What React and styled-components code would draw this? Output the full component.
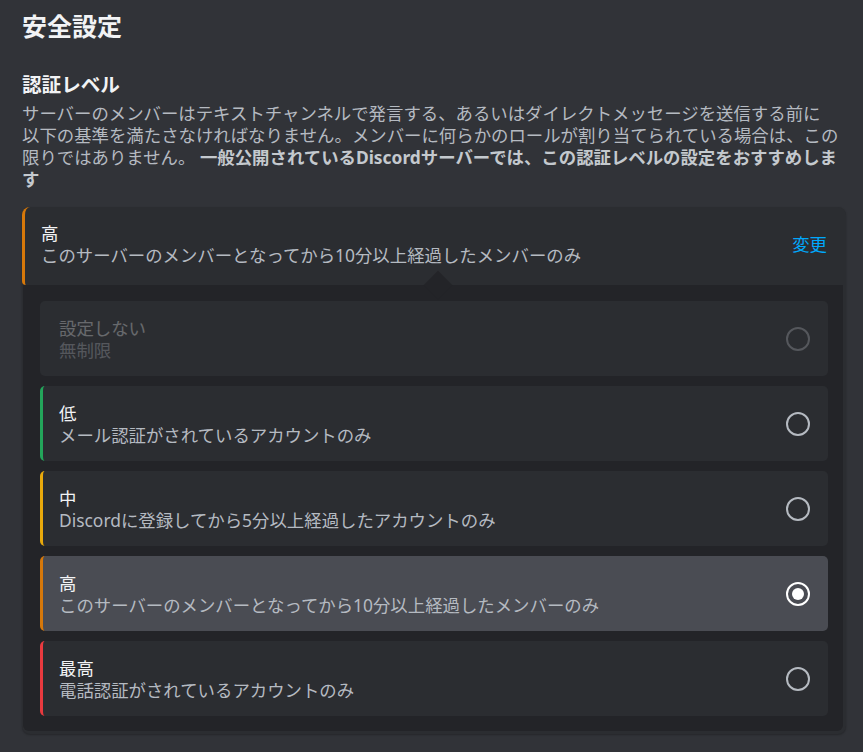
import React from 'react';
import styled, { createGlobalStyle, css } from 'styled-components';

const GlobalStyle = createGlobalStyle`
  html, body {
    margin: 0;
    padding: 0;
    background: #313338;
  }
  body {
    font-family: "Noto Sans", "Noto Sans CJK JP", sans-serif;
    -webkit-font-smoothing: antialiased;
  }
`;

const Page = styled.div`
  min-height: 752px;
  box-sizing: border-box;
  padding: 11px 17px 0 22px;
  background: #313338;
  color: #b5bac1;
`;

const Title = styled.h1`
  margin: 0;
  font-size: 25px;
  line-height: 30px;
  font-weight: 700;
  color: #f2f3f5;
`;

const SectionTitle = styled.h2`
  margin: 32px 0 5px;
  font-size: 19.6px;
  line-height: 24px;
  font-weight: 700;
  color: #f2f3f5;
`;

const Description = styled.p`
  margin: 0 0 17px;
  font-size: 17.4px;
  line-height: 22px;
  color: #b5bac1;

  strong {
    font-weight: 700;
    color: #c4c9ce;
  }
`;

const Card = styled.div`
  background: #2b2d31;
  border-radius: 8px;
  padding-bottom: 3px;
  box-shadow: 0 1px 2px rgba(0, 0, 0, 0.25);
`;

const Header = styled.div`
  display: flex;
  align-items: center;
  justify-content: space-between;
  padding: 15px 19px 19px 16px;
  border-left: 3px solid ${p => p.$accent};
  border-radius: 8px 8px 0 4px;
`;

const Texts = styled.div`
  display: flex;
  flex-direction: column;
  font-size: 17.4px;
  line-height: 22px;
  ${p => p.$disabled && css`opacity: 0.3;`}
`;

const Name = styled.span`
  color: #f2f3f5;
`;

const Sub = styled.span`
  color: #b5bac1;
`;

const ChangeLink = styled.a`
  color: #00a8fc;
  font-size: 17.4px;
  line-height: 22px;
  cursor: pointer;
`;

const Panel = styled.div`
  position: relative;
  margin: 0 3px 0 1px;
  padding: 16px 15px 15px 17px;
  background: #232428;
  border-radius: 0 0 6px 6px;
  display: flex;
  flex-direction: column;
  gap: 10px;

  &::before {
    content: '';
    position: absolute;
    top: -10px;
    left: 405px;
    width: 20px;
    height: 20px;
    background: #232428;
    transform: rotate(45deg);
  }
`;

const Option = styled.div`
  position: relative;
  display: flex;
  align-items: center;
  justify-content: space-between;
  height: 75px;
  box-sizing: border-box;
  padding: 0 18px 0 16px;
  border-radius: 5px;
  border-left: 3px solid ${p => p.$accent || 'transparent'};
  background: ${p => (p.$selected ? '#4a4c53' : '#2b2d31')};
  cursor: ${p => (p.$disabled ? 'not-allowed' : 'pointer')};
`;

const Radio = styled.span`
  width: 24px;
  height: 24px;
  box-sizing: border-box;
  border-radius: 50%;
  border: 2px solid ${p => (p.$checked ? '#ffffff' : '#b5bac1')};
  display: flex;
  align-items: center;
  justify-content: center;
  ${p => p.$disabled && css`opacity: 0.3;`}

  &::after {
    content: '';
    display: ${p => (p.$checked ? 'block' : 'none')};
    width: 12px;
    height: 12px;
    border-radius: 50%;
    background: #ffffff;
  }
`;

const levels = [
  { id: 'none', name: '設定しない', desc: '無制限', disabled: true },
  { id: 'low', name: '低', desc: 'メール認証がされているアカウントのみ', color: '#23a55a' },
  { id: 'medium', name: '中', desc: 'Discordに登録してから5分以上経過したアカウントのみ', color: '#e8a90c' },
  { id: 'high', name: '高', desc: 'このサーバーのメンバーとなってから10分以上経過したメンバーのみ', color: '#d6780a' },
  { id: 'highest', name: '最高', desc: '電話認証がされているアカウントのみ', color: '#e83a3f' },
];

export default function App() {
  const current = levels.find(l => l.id === 'high');

  return (
    <Page>
      <GlobalStyle />
      <Title>安全設定</Title>

      <SectionTitle>認証レベル</SectionTitle>
      <Description>
        サーバーのメンバーはテキストチャンネルで発言する、あるいはダイレクトメッセージを送信する前に
        <br />
        以下の基準を満たさなければなりません。メンバーに何らかのロールが割り当てられている場合は、この
        <br />
        限りではありません。{' '}
        <strong>
          一般公開されているDiscordサーバーでは、この認証レベルの設定をおすすめしま
          <br />
          す
        </strong>
      </Description>

      <Card>
        <Header $accent={current.color}>
          <Texts>
            <Name>{current.name}</Name>
            <Sub>{current.desc}</Sub>
          </Texts>
          <ChangeLink>変更</ChangeLink>
        </Header>

        <Panel>
          {levels.map(level => (
            <Option
              key={level.id}
              $accent={level.color}
              $selected={level.id === current.id}
              $disabled={level.disabled}
            >
              <Texts $disabled={level.disabled}>
                <Name>{level.name}</Name>
                <Sub>{level.desc}</Sub>
              </Texts>
              <Radio $checked={level.id === current.id} $disabled={level.disabled} />
            </Option>
          ))}
        </Panel>
      </Card>
    </Page>
  );
}
